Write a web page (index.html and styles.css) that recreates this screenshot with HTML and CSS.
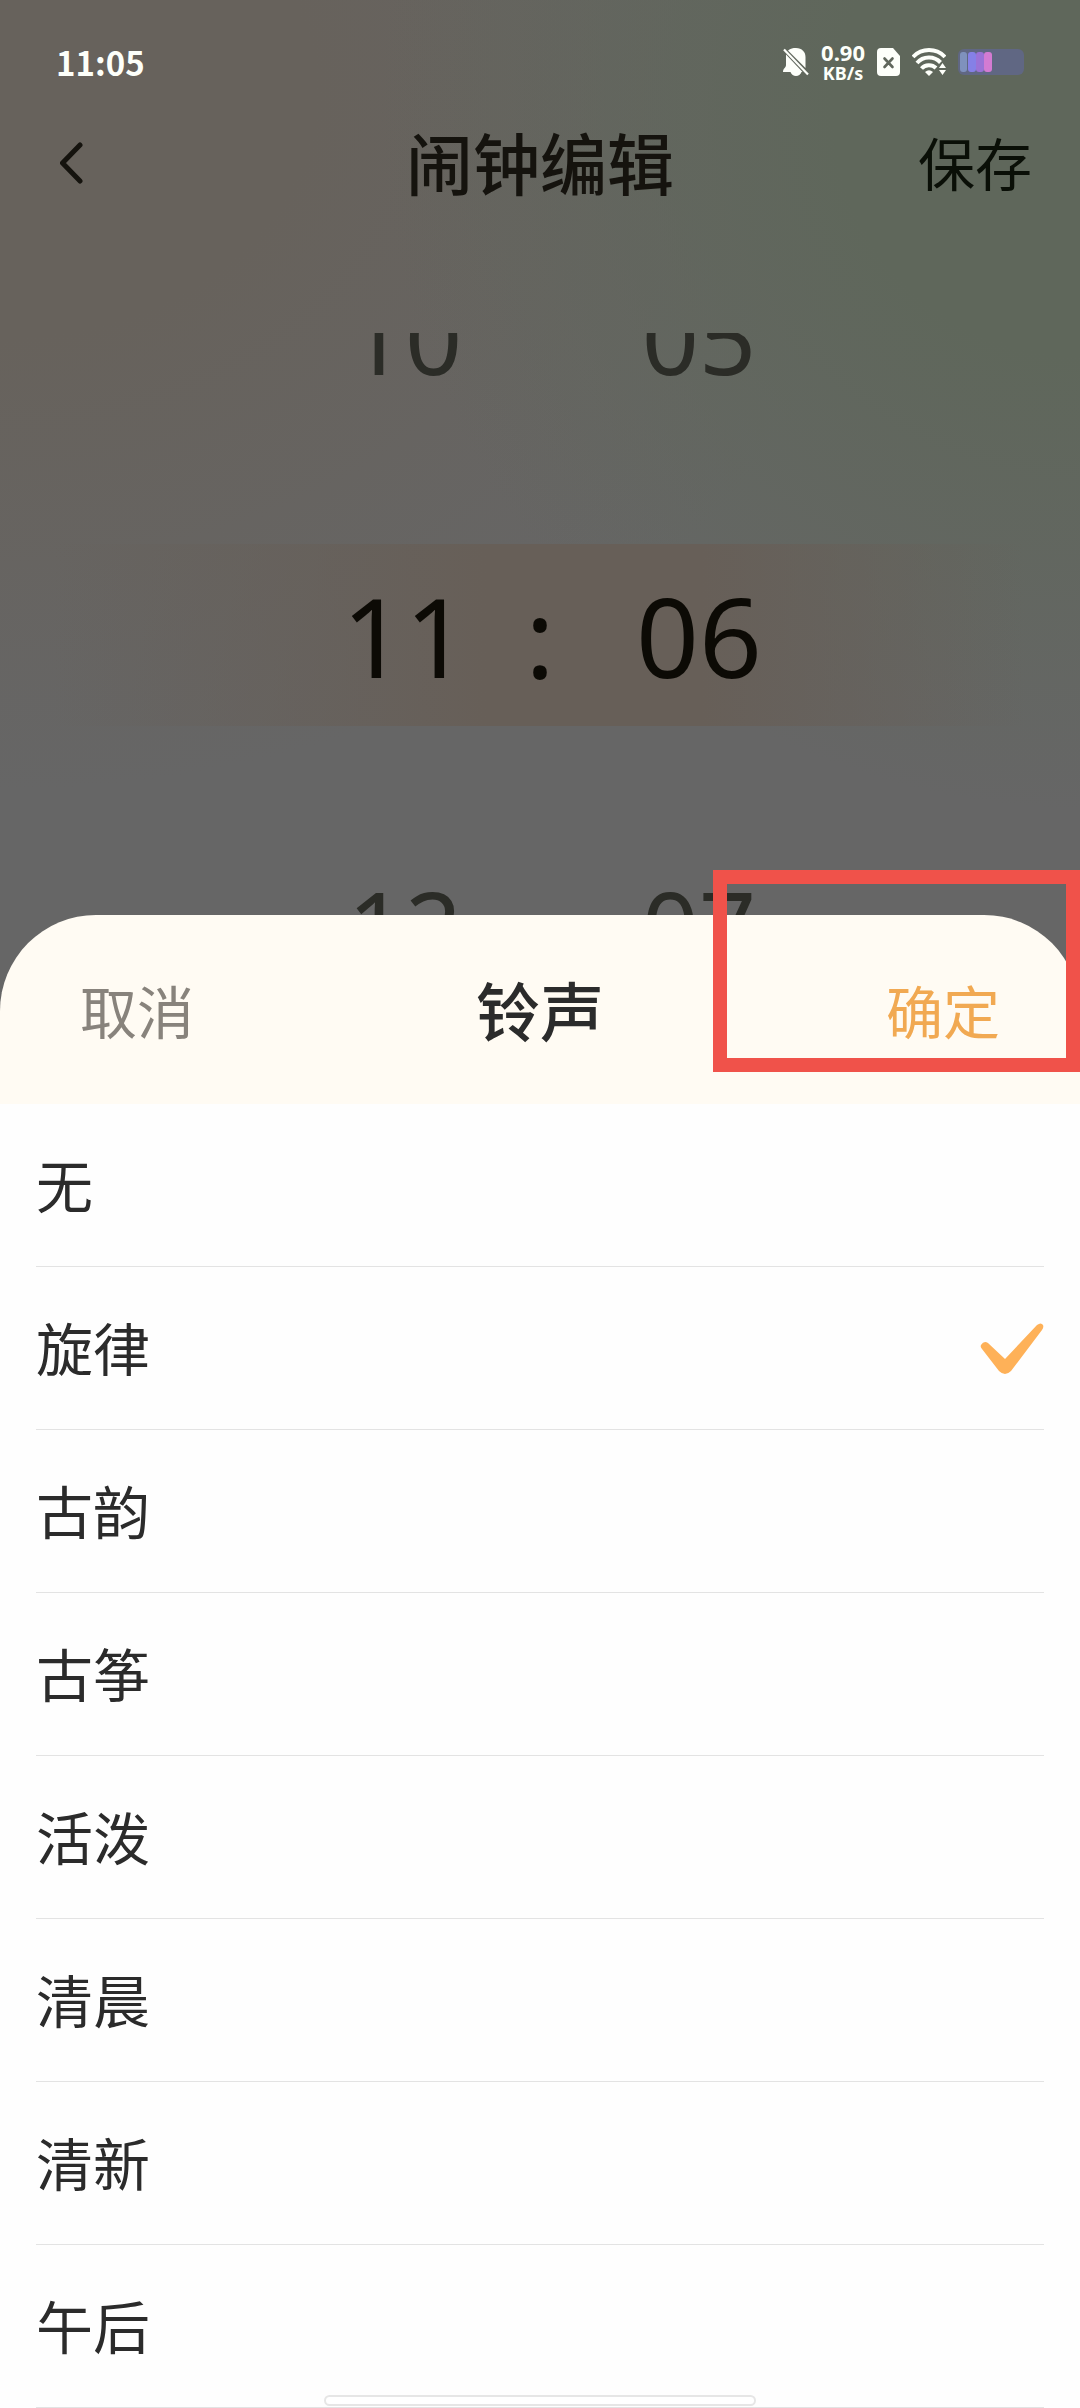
FILE: index.html
```html
<!DOCTYPE html>
<html lang="zh-CN">

<head>
    <meta charset="UTF-8">
    <meta name="viewport" content="width=device-width, initial-scale=1.0">
    <title>闹钟编辑</title>
    <link rel="stylesheet" href="styles.css">
</head>

<body>
    <div class="editor">
        <div class="status-bar">
            <span class="status-time">11:05</span>
            <div class="status-icons">
                <svg class="icon-bell" width="26" height="28" viewBox="0 0 26 28">
                    <path d="M5 2.500C7.500 .500 10 0 13 0c6 0 9.500 4 9.500 9v11z" fill="#fdfffa"/>
                    <path d="M3 6.500V17c0 3-3 3-3 7h7.500c1 2.500 3 4 5.500 4s4.500-1.500 5.500-4h1z" fill="#fdfffa"/>
                    <path d="M1 1.500l24 25" stroke="#fdfffa" stroke-width="2.200" fill="none"/>
                </svg>
                <div class="net-speed">
                    <span class="speed-value">0.90</span>
                    <span class="speed-unit">KB/s</span>
                </div>
                <svg class="icon-sim" width="23" height="28" viewBox="0 0 23 28">
                    <path d="M4 0h12l7 8v16a4 4 0 0 1-4 4H4a4 4 0 0 1-4-4V4a4 4 0 0 1 4-4z" fill="#fdfffa"/>
                    <path d="M7.500 10.500l8 8.500M15.500 10.500l-8 8.500" stroke="#60675c" stroke-width="2.600" stroke-linecap="round"/>
                </svg>
                <svg class="icon-wifi" width="34" height="28" viewBox="0 0 34 28">
                    <g fill="none" stroke="#fdfffa" stroke-width="4">
                        <path d="M1 9a22 22 0 0 1 32 0"/>
                        <path d="M5 15a16 16 0 0 1 23.500-.500"/>
                        <path d="M9.500 20.500a10 10 0 0 1 14.500-.500"/>
                    </g>
                    <path d="M13 24q4-3.500 8 0l-4 4z" fill="#fdfffa"/>
                    <path d="M27 20l3.500-5 3.500 5zM27 22h7l-3.500 5z" fill="#fdfffa"/>
                </svg>
                <svg class="icon-battery" width="66" height="26" viewBox="0 0 66 26">
                    <rect width="66" height="26" rx="6" fill="#606783"/>
                    <rect x="2" y="3" width="7" height="20" rx="3" fill="#7f91bd"/>
                    <rect x="10" y="3" width="8" height="20" rx="3" fill="#8580e6"/>
                    <rect x="18" y="3" width="8" height="20" rx="3" fill="#9a72d6"/>
                    <rect x="26" y="3" width="8" height="20" rx="3" fill="#d37bd2"/>
                </svg>
            </div>
        </div>

        <div class="title-bar">
            <button class="back-btn" aria-label="返回">
                <svg width="26" height="44" viewBox="0 0 26 44">
                    <path d="M20 3L2.500 21 20 39" fill="none" stroke="#15130e" stroke-width="5" stroke-linecap="round" stroke-linejoin="round"/>
                </svg>
            </button>
            <h1>闹钟编辑</h1>
            <button class="save-btn">保存</button>
        </div>

        <div class="picker">
            <div class="picker-row faded">
                <span class="hour">10</span>
                <span></span>
                <span class="minute">05</span>
            </div>
            <div class="picker-row selected">
                <span class="hour">11</span>
                <span class="colon">:</span>
                <span class="minute">06</span>
            </div>
            <div class="picker-row faded">
                <span class="hour">12</span>
                <span></span>
                <span class="minute">07</span>
            </div>
        </div>
    </div>

    <form class="sheet">
        <div class="sheet-header">
            <button type="button" class="cancel-btn">取消</button>
            <h2>铃声</h2>
            <button type="button" class="ok-btn">确定</button>
            <div class="highlight"></div>
        </div>
        <div class="ringtones">
            <label class="ringtone">无
                <input type="radio" name="ringtone" value="none">
            </label>
            <label class="ringtone">旋律
                <input type="radio" name="ringtone" value="melody" checked>
                <svg class="check" width="64" height="54" viewBox="0 0 64 54">
                    <path d="M1 23Q4 18 8 21L25 37 57 3Q61 0 63 3 64 5 62 8L31 49Q25 55 19 49L2 27Q0 25 1 23z" fill="#feb158"/>
                </svg>
            </label>
            <label class="ringtone">古韵
                <input type="radio" name="ringtone" value="guyun">
            </label>
            <label class="ringtone">古筝
                <input type="radio" name="ringtone" value="guzheng">
            </label>
            <label class="ringtone">活泼
                <input type="radio" name="ringtone" value="lively">
            </label>
            <label class="ringtone">清晨
                <input type="radio" name="ringtone" value="morning">
            </label>
            <label class="ringtone">清新
                <input type="radio" name="ringtone" value="fresh">
            </label>
            <label class="ringtone">午后
                <input type="radio" name="ringtone" value="afternoon">
            </label>
        </div>
        <div class="home-indicator"></div>
    </form>
</body>

</html>
```

FILE: styles.css
```css
* {
    box-sizing: border-box;
}

body {
    margin: 0;
    background-color: #666666;
    font-family: "Noto Sans", "Noto Sans CJK SC", sans-serif;
    color: #2b2b2b;
}

button {
    padding: 0;
    border: none;
    background: none;
    font-family: inherit;
    font-size: 57px;
    line-height: 80px;
    cursor: pointer;
}

h1, h2 {
    margin: 0;
    font-weight: 500;
    text-align: center;
}

/* dimmed page behind the sheet */
.editor {
    background:
        radial-gradient(ellipse 700px 700px at 100% 12%, #5f675b 35%, rgba(95, 103, 91, 0) 100%),
        radial-gradient(ellipse 900px 700px at 0 10%, #67625c 35%, rgba(103, 98, 92, 0) 100%),
        #666666;
}

.status-bar {
    display: flex;
    justify-content: space-between;
    align-items: center;
    height: 124px;
    padding: 0 56px;
    color: #fdfffa;
}

.status-time {
    font-family: "Noto Sans CJK SC", sans-serif;
    font-size: 33px;
    font-weight: bold;
}

.status-icons {
    display: flex;
    align-items: center;
    gap: 12px;
}

.net-speed {
    display: flex;
    flex-direction: column;
    align-items: center;
    font-weight: bold;
}

.speed-value {
    font-size: 22px;
    line-height: 22px;
}

.speed-unit {
    font-size: 18px;
    line-height: 20px;
}

.title-bar {
    display: grid;
    grid-template-columns: 1fr auto 1fr;
    align-items: center;
    height: 72px;
    padding: 0 48px;
}

.title-bar h1 {
    font-size: 67px;
    line-height: 72px;
    color: #15130e;
}

.back-btn {
    justify-self: start;
    margin-left: 12px;
    line-height: 1;
}

.back-btn svg {
    display: block;
}

.save-btn {
    justify-self: end;
    color: #0a0f07;
}

.picker {
    display: flex;
    flex-direction: column;
    height: 582px;
    margin-top: 137px;
    overflow: hidden;
}

.picker-row {
    display: grid;
    grid-template-columns: 1fr 30px 1fr;
    align-items: center;
    flex: none;
    color: #0c0a05;
}

/* the outer rows run past the edges of the picker */
.faded {
    height: 258px;
    font-size: 100px;
    line-height: 100px;
    color: #2b2c27;
}

.faded:first-child {
    align-items: start;
    margin-top: -47px;
}

.faded:last-child {
    align-items: end;
    padding-bottom: 8px;
}

.selected {
    height: 182px;
    font-size: 110px;
    background: linear-gradient(90deg, rgba(103, 95, 88, 0) 5%, #675f58 45%, #675f58 65%, rgba(103, 95, 88, 0) 95%);
}

.hour, .minute {
    width: 140px;
    text-align: center;
}

.hour {
    justify-self: end;
    margin-right: 50px;
}

.minute {
    margin-left: 74px;
}

.colon {
    text-align: center;
}

.sheet {
    position: relative;
}

.sheet-header {
    position: relative;
    display: grid;
    grid-template-columns: 1fr auto 1fr;
    align-items: center;
    height: 189px;
    padding: 4px 80px 0;
    border-radius: 96px 96px 0 0;
    background-color: #fffbf3;
}

.sheet-header h2 {
    font-size: 64px;
    line-height: 80px;
}

.cancel-btn {
    justify-self: start;
    color: #88837c;
}

.ok-btn {
    justify-self: end;
    color: #f1a952;
}

.highlight {
    position: absolute;
    top: -45px;
    right: 0;
    width: 34%;
    height: 202px;
    border: 14px solid #f0524a;
    pointer-events: none;
}

.ringtones {
    padding: 0 36px;
    background-color: #fefefe;
}

.ringtone {
    display: flex;
    justify-content: space-between;
    align-items: center;
    height: 163px;
    padding-top: 2px;
    border-bottom: 1px solid #e3e3e3;
    font-size: 57px;
    line-height: 80px;
    cursor: pointer;
}

.ringtone input {
    appearance: none;
    width: 0;
    height: 0;
    margin: 0;
}

.home-indicator {
    position: absolute;
    bottom: 2px;
    left: 30%;
    width: 40%;
    height: 11px;
    border: 2px solid #e6e6e6;
    border-radius: 6px;
    background-color: #ffffff;
}
```
